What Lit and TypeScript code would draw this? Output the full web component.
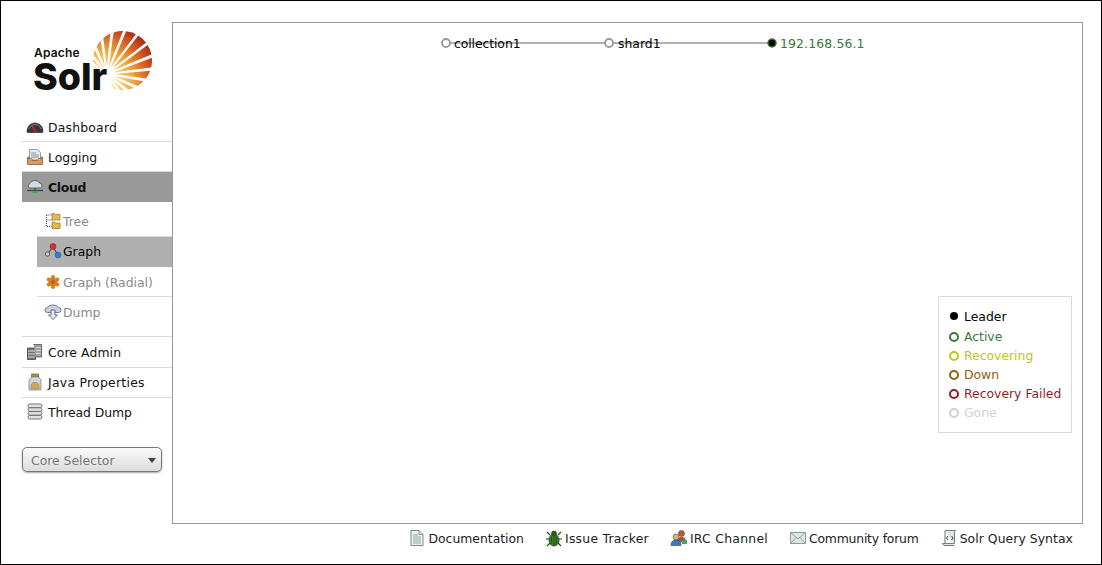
import { LitElement, html, css, svg } from "lit";
import { customElement } from "lit/decorators.js";

const icons: Record<string, any> = {
  dashboard: svg`<path d="M1 13.500c0-5 3.500-8.500 8-8.500s8 3.500 8 8.500c0 .6-.4 1-1 1H2c-.6 0-1-.4-1-1z" fill="#33373b" stroke="#1d2023" stroke-width=".6"/><path d="M3 11c.6-2.600 3-4.500 6-4.500s5.400 1.900 6 4.500" fill="none" stroke="#858a90" stroke-width=".9"/><path d="M5.500 7.500l5 7" stroke="#cf2a1c" stroke-width="1.500"/>`,
  logging: svg`<path d="M1.500 9h15v7.500h-15z" fill="#dc9a61" stroke="#8f5a2c" stroke-width=".8"/><path d="M3.500 1.500h8l3 3v7.500h-11z" fill="#e6edf2" stroke="#7e8a93" stroke-width=".8"/><path d="M5 5h5M5 7h8M5 9h8" stroke="#7f97a8"/><path d="M1.500 10.500h4l1 2h5l1-2h4" fill="#f0ba85" stroke="#8f5a2c" stroke-width=".8"/>`,
  cloud: svg`<path d="M3.500 10a2.500 2.500 0 0 1 .5-4.500A5 4 0 0 1 13.500 5a2.600 2.600 0 0 1 1 5z" fill="#d5d9e0" stroke="#50555c" stroke-width=".9"/><path d="M1 12.500h16" stroke="#3f454b" stroke-width="1.300"/><path d="M9 10v2" stroke="#444"/><path d="M6.500 13.200h5v1.800h-5z" fill="#39a845"/>`,
  tree: svg`<path d="M2.500 3v11.500h5M2.500 3h5M2.500 8h5" fill="none" stroke="#444" stroke-dasharray="1 1"/><path d="M8 1.500h2.500l1 1H16v5.500H8zM8 10h2.500l1 1H16v5.500H8z" fill="#e6b84e" stroke="#a67a1c" stroke-width=".8"/>`,
  graph: svg`<path d="M9 4.500L4 11.500M9 4.500l4.500 8" stroke="#333" stroke-width="1" fill="none"/><circle cx="9" cy="4.500" r="3" fill="#cf2f3a" stroke="#8c1d24" stroke-width=".5"/><circle cx="14" cy="13" r="3" fill="#2f7fca" stroke="#1d5a96" stroke-width=".5"/><circle cx="3.500" cy="12" r="2.200" fill="#c7c7c7" stroke="#444" stroke-width=".8"/>`,
  radial: svg`<g stroke="#dc7d22" stroke-width="4" stroke-linecap="round"><path d="M9 4v10M4.700 6.500l8.600 5M13.300 6.500l-8.600 5"/></g><circle cx="9" cy="9" r="2" fill="#b9630f"/>`,
  dump: svg`<path d="M3.500 9.500a2.500 2.500 0 0 1-.2-5A6 4 0 0 1 14.500 4.500a2.500 2.500 0 0 1 .2 5z" fill="#c9cfde" stroke="#6a7184" stroke-width=".9"/><path d="M7 7h4v5h2.500L9 16.500 4.500 12H7z" fill="#e4e7ef" stroke="#5c6375" stroke-width=".9"/>`,
  core: svg`<path d="M1.500 5h8v11.500h-8z" fill="#737874" stroke="#3e423f" stroke-width=".8"/><path d="M7.500 1.500h8v12.500h-6" fill="#9ea39f" stroke="#4c504d" stroke-width=".8"/><path d="M2 8h7M2 11h7M2 14h7M10 4.500h5M10 7.500h5M10 10.500h5" stroke="#d4d7d4"/>`,
  java: svg`<path d="M5.500 1h7v3h-7z" fill="#b98a3e" stroke="#7e5a20" stroke-width=".7"/><path d="M5.500 4h7l2.500 3v10H3V7z" fill="#c9d6e2" stroke="#7d8b98" stroke-width=".8"/><path d="M5 12l2-2.500h4l2 2.500v4H5z" fill="#d6a653" stroke="#a2762c" stroke-width=".5"/>`,
  thread: svg`<g fill="#e2e3e0" stroke="#666866" stroke-width=".9"><rect x="2" y="1" width="14" height="3.600" rx="1.800"/><rect x="2" y="4.800" width="14" height="3.600" rx="1.800"/><rect x="2" y="8.600" width="14" height="3.600" rx="1.800"/><rect x="2" y="12.400" width="14" height="3.600" rx="1.800"/></g>`,
  doc: svg`<path d="M3 1.500h8l4 4v11H3z" fill="#eef1ee" stroke="#6f7b78" stroke-width=".9"/><path d="M11 1.500v4h4" fill="#cdd6d3" stroke="#6f7b78" stroke-width=".7"/><path d="M5 6h5M5 8h8M5 10h8M5 12h8M5 14h8" stroke="#8fa8a2"/>`,
  bug: svg`<path d="M5 6L2 3M13 6l3-3M4 10H1M14 10h3M5 14l-3 3M13 14l3 3" stroke="#1f4a12" stroke-width="1.100"/><ellipse cx="9" cy="11" rx="5" ry="6" fill="#3e7a26" stroke="#1f4a12" stroke-width=".8"/><circle cx="9" cy="4.500" r="2.800" fill="#2a5b19"/><path d="M9 6v11M6.500 8v7M11.500 8v7" stroke="#1f4a12" stroke-width=".7"/>`,
  irc: svg`<circle cx="11.500" cy="4.500" r="3" fill="#a8623a" stroke="#6d3717" stroke-width=".6"/><path d="M7 13c0-4 2-5 4.500-5S16 9 16 13z" fill="#b34a3a"/><circle cx="6" cy="8" r="3" fill="#dcae86" stroke="#6d4a2c" stroke-width=".6"/><path d="M1 16.500c0-4 2-5.500 5-5.500s5 1.500 5 5.500z" fill="#3d79bb" stroke="#234e80" stroke-width=".6"/><path d="M12 11h5v4h-5z" fill="#4aa065"/>`,
  mail: svg`<path d="M1.500 3.500h15v11h-15z" fill="#dde6e6" stroke="#83908f" stroke-width=".9"/><path d="M1.500 3.500L9 10l7.500-6.500M1.500 14.500L7 8.500M16.500 14.500L11 8.500" fill="none" stroke="#83908f" stroke-width=".8"/>`,
  query: svg`<path d="M5 1.500h10.500l-1 1.500v11.500H2.500L4 16.500h10.500" fill="#dee5e3" stroke="#66726f" stroke-width=".9"/><path d="M5 1.500v13" stroke="#66726f"/><path d="M8 7L6.500 9 8 11M11.500 7L13 9l-1.500 2" fill="none" stroke="#2e3c3a" stroke-width="1"/>`,
};

function icon(name: string) {
  return html`<svg class="ic" viewBox="0 0 18 18" width="18" height="18">${icons[name]}</svg>`;
}

function rays() {
  const fx = 107, fy = 74, cx = 122.500, cy = 60.500, r = 29.500;
  const out: any[] = [];
  const n = 17;
  const start = 62, end = -182;
  for (let i = 0; i < n; i++) {
    const t = i / (n - 1);
    const a = (start + (end - start) * t) * Math.PI / 180;
    const w = 0.055 + 0.05 * Math.sin(Math.PI * Math.min(1, t * 1.15));
    const p = (an: number) => {
      const dx = Math.cos(an), dy = Math.sin(an);
      const ox = fx - cx, oy = fy - cy;
      const b = ox * dx + oy * dy;
      const s = -b + Math.sqrt(b * b - (ox * ox + oy * oy - r * r));
      return [fx + dx * s, fy + dy * s];
    };
    const [x1, y1] = p(a - w), [x2, y2] = p(a + w);
    const ix = fx + Math.cos(a) * 7, iy = fy + Math.sin(a) * 7;
    out.push(svg`<path d="M${ix.toFixed(1)} ${iy.toFixed(1)}L${x1.toFixed(1)} ${y1.toFixed(1)}A${r} ${r} 0 0 1 ${x2.toFixed(1)} ${y2.toFixed(1)}Z" fill="url(#sun)"/>`);
  }
  return out;
}

@customElement("app-root")
export class AppRoot extends LitElement {
  static styles = css`
    :host { display: block; box-sizing: border-box; width: 1102px; height: 565px; border: 1px solid #000; background: #fff; font-family: "DejaVu Sans", Verdana, sans-serif; font-size: 12.4px; color: #000; overflow: hidden; }
    .page { display: grid; grid-template-columns: 150px 911px; grid-template-rows: 502px auto; padding: 21px 0 0 21px; }
    .side { display: flex; flex-direction: column; }
    .logo { height: 90px; flex: none; }
    .logo svg { display: block; }
    .logo-text { font-family: "Inter", sans-serif; fill: #111; }
    .item { box-sizing: border-box; display: flex; align-items: center; gap: 4px; height: 30px; padding-left: 4px; border-bottom: 1px solid #d9d9d9; color: #111; }
    .item span { position: relative; top: .5px; }
    .item.tall { height: 31px; }
    .item.last { border-bottom: 0; }
    .item.up { padding-bottom: 1px; }
    .item.up2 { padding-bottom: 2px; }
    .item.active { background: #999; font-weight: bold; border-bottom: 0; letter-spacing: -.3px; }
    .sub { display: flex; flex-direction: column; margin: 0 0 9px 15px; padding-top: 4px; }
    .sub .item { padding-left: 7px; gap: 1px; color: #8a8a8a; height: 30px; }
    .sub .item.first { height: 31px; }
    .sub .item.on { background: #b0b0b0; color: #000; border-bottom: 0; padding-bottom: 2px; }
    .ic { flex: none; }
    .rule { border-top: 1px solid #d9d9d9; }
    .selector { box-sizing: border-box; width: 140px; height: 25px; margin-top: 19px; border: 1px solid #777; border-radius: 5px; background: linear-gradient(#fafafa, #dcdcdc); box-shadow: 0 1px 2px rgba(0,0,0,.35); display: flex; align-items: center; justify-content: space-between; padding: 1px 5px 0 8px; color: #777; }
    .caret { width: 0; height: 0; border: 4.5px solid transparent; border-top: 5px solid #444; border-bottom: 0; }
    .main { position: relative; box-sizing: border-box; border: 1px solid #999; }
    .graph { position: absolute; inset: 0; display: block; }
    .graph text { font-family: "DejaVu Sans", Verdana, sans-serif; font-size: 12.4px; }
    .legend { position: absolute; right: 10px; bottom: 90px; box-sizing: border-box; width: 134px; height: 137px; border: 1px solid #d9d9d9; padding: 9px 0 0 10px; display: flex; flex-direction: column; }
    .lg { display: flex; align-items: center; gap: 5px; height: 19px; white-space: nowrap; }
    .lg.lead { height: 20px; margin-bottom: 1px; }
    .dot { box-sizing: border-box; flex: none; width: 10px; height: 10px; border-radius: 50%; border: 2px solid currentColor; }
    .lead .dot { border: 0; width: 8px; height: 8px; margin: 0 1px; background: #000; }
    .foot { grid-column: 1 / 3; display: flex; justify-content: flex-end; gap: 21px; padding: 5px 10px 0 0; }
    .fl { display: flex; align-items: center; gap: 2px; height: 18px; color: #222; }
  `;

  render() {
    const top = (n: string, t: string, cls = "", ls = 0) => html`<div class="item ${cls}">${icon(n)}<span style="letter-spacing:${ls}px">${t}</span></div>`;
    const legend: [string, string][] = [
      ["Leader", "#000"], ["Active", "#387a38"], ["Recovering", "#c2c21e"],
      ["Down", "#8a6410"], ["Recovery Failed", "#8f1f1f"], ["Gone", "#d0d0d0"],
    ];
    const foot: [string, string, number][] = [["doc", "Documentation", 0], ["bug", "Issue Tracker", .25], ["irc", "IRC Channel", .27], ["mail", "Community forum", -.2], ["query", "Solr Query Syntax", .06]];
    return html`<div class="page">
      <div class="side">
        <div class="logo">
          <svg width="150" height="90" viewBox="22 22 150 90">
            <defs><radialGradient id="sun" gradientUnits="userSpaceOnUse" cx="98" cy="85" r="64">
              <stop offset=".2" stop-color="#fbe9a8"/><stop offset=".55" stop-color="#efa93d"/><stop offset=".8" stop-color="#d45d22"/><stop offset="1" stop-color="#a62a17"/>
            </radialGradient></defs>
            ${rays()}
            <text x="34" y="57" class="logo-text" font-size="12" font-weight="600" letter-spacing=".2">Apache</text>
            <text x="33" y="90" class="logo-text" font-size="37.500" font-weight="800">Solr</text>
          </svg>
        </div>
        ${top("dashboard", "Dashboard", "", .2)}
        ${top("logging", "Logging")}
        ${top("cloud", "Cloud", "active", -.3)}
        <div class="sub">
          <div class="item first">${icon("tree")}<span>Tree</span></div>
          <div class="item on">${icon("graph")}<span>Graph</span></div>
          <div class="item">${icon("radial")}<span>Graph (Radial)</span></div>
          <div class="item last">${icon("dump")}<span>Dump</span></div>
        </div>
        <div class="rule"></div>
        ${top("core", "Core Admin", "tall", .1)}
        ${top("java", "Java Properties", "up", .27)}
        ${top("thread", "Thread Dump", "last up2", -.08)}
        <div class="selector"><span>Core Selector</span><span class="caret"></span></div>
      </div>
      <div class="main">
        <svg class="graph" width="909" height="500">
          <path d="M273 20H599" stroke="#999" stroke-width="1.500"/>
          <circle cx="273" cy="20" r="4" fill="#fff" stroke="#999" stroke-width="1.800"/>
          <text x="281" y="25" letter-spacing="-.08">collection1</text>
          <circle cx="436" cy="20" r="4" fill="#fff" stroke="#999" stroke-width="1.800"/>
          <text x="445" y="25">shard1</text>
          <circle cx="599" cy="20" r="4" fill="#000" stroke="#387a38" stroke-width="1.500"/>
          <text x="607" y="25" fill="#387a38" letter-spacing=".15">192.168.56.1</text>
        </svg>
        <div class="legend">
          ${legend.map(([t, c], i) => html`<div class="lg ${i === 0 ? "lead" : ""}" style="color:${c}"><span class="dot"></span>${t}</div>`)}
        </div>
      </div>
      <div class="foot">
        ${foot.map(([i, t, ls]) => html`<div class="fl">${icon(i)}<span style="letter-spacing:${ls}px">${t}</span></div>`)}
      </div>
    </div>`;
  }
}
